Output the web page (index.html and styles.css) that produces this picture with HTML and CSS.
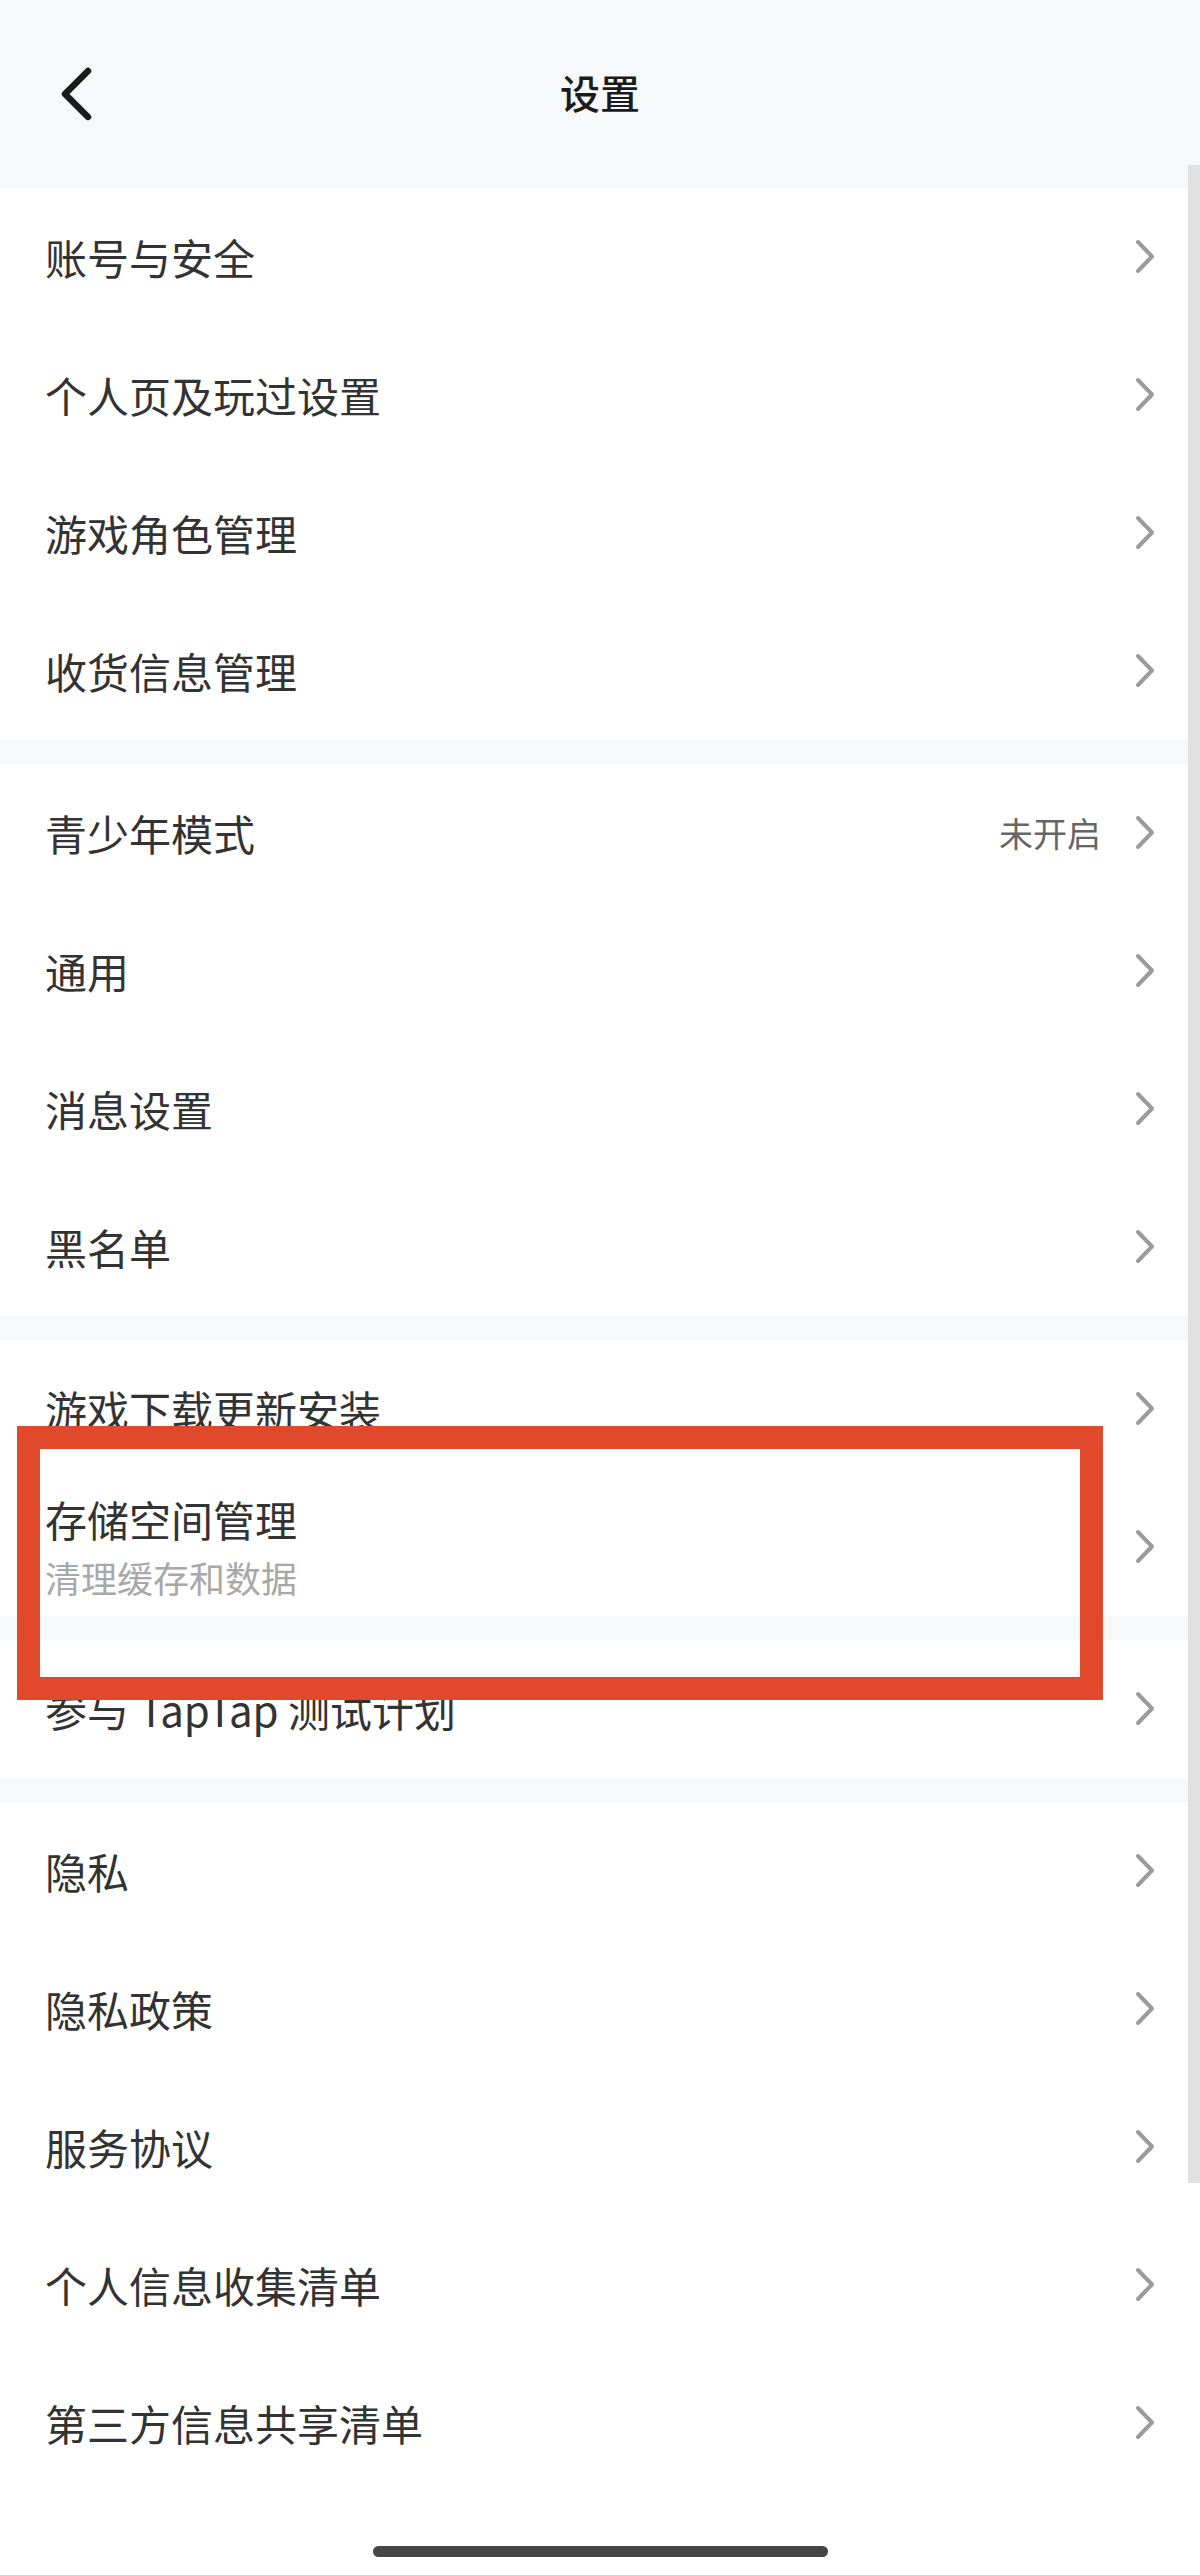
FILE: index.html
```html
<!DOCTYPE html>
<html lang="zh-CN">
<head>
<meta charset="utf-8">
<title>设置</title>
<link rel="stylesheet" href="styles.css">
</head>
<body>
<div class="page">
  <header class="topbar">
    <svg class="back" viewBox="0 0 40 60" width="40" height="60" aria-hidden="true"><path d="M30 8 L7 31 L30 54" fill="none" stroke="#1b1b1b" stroke-width="6.5" stroke-linecap="round" stroke-linejoin="round"/></svg>
    <h1 class="title">设置</h1>
  </header>

  <div class="groups">
    <section class="group">
      <div class="row"><span class="label">账号与安全</span><span class="arrow"></span></div>
      <div class="row"><span class="label">个人页及玩过设置</span><span class="arrow"></span></div>
      <div class="row"><span class="label">游戏角色管理</span><span class="arrow"></span></div>
      <div class="row"><span class="label">收货信息管理</span><span class="arrow"></span></div>
    </section>
    <section class="group">
      <div class="row"><span class="label">青少年模式</span><span class="value">未开启</span><span class="arrow"></span></div>
      <div class="row"><span class="label">通用</span><span class="arrow"></span></div>
      <div class="row"><span class="label">消息设置</span><span class="arrow"></span></div>
      <div class="row"><span class="label">黑名单</span><span class="arrow"></span></div>
    </section>
    <section class="group">
      <div class="row"><span class="label">游戏下载更新安装</span><span class="arrow"></span></div>
      <div class="row">
        <div class="stack">
          <span class="label main">存储空间管理</span>
          <span class="sub">清理缓存和数据</span>
        </div>
        <span class="arrow"></span>
      </div>
    </section>
    <section class="group">
      <div class="row"><span class="label">参与 TapTap 测试计划</span><span class="arrow"></span></div>
    </section>
    <section class="group last">
      <div class="row"><span class="label">隐私</span><span class="arrow"></span></div>
      <div class="row"><span class="label">隐私政策</span><span class="arrow"></span></div>
      <div class="row"><span class="label">服务协议</span><span class="arrow"></span></div>
      <div class="row"><span class="label">个人信息收集清单</span><span class="arrow"></span></div>
      <div class="row"><span class="label">第三方信息共享清单</span><span class="arrow"></span></div>
      <div class="home-area"><span class="home-bar"></span></div>
    </section>
  </div>

  <div class="highlight"></div>
  <div class="scrollbar"></div>
</div>
</body>
</html>
```

FILE: styles.css
```css
html, body {
  margin: 0;
  padding: 0;
  background: #ffffff;
}

body {
  font-family: "Noto Sans CJK SC", "Noto Sans", "Liberation Sans", sans-serif;
  color: #333333;
}

.page {
  position: relative;
  width: 1200px;
  height: 2575px;
  overflow: hidden;
  background: #ffffff;
}

.topbar {
  height: 188px;
  background: #f7f8fa;
  display: flex;
  align-items: center;
  justify-content: center;
  position: relative;
}

.back {
  position: absolute;
  left: 58px;
  top: 63px;
}

.title {
  margin: 0;
  font-size: 40px;
  font-weight: 500;
  color: #1b1b1b;
  line-height: 1;
  padding-bottom: 4px;
}

.groups {
  display: flex;
  flex-direction: column;
  gap: 24px;
  background: #f7f8fa;
}

.group {
  background: #ffffff;
  display: flex;
  flex-direction: column;
}

.row {
  height: 138px;
  display: flex;
  align-items: center;
  padding: 0 44px 0 45px;
  box-sizing: border-box;
}

.label {
  font-size: 42px;
  line-height: 56px;
  color: #333333;
  flex: 1;
  white-space: nowrap;
}

.stack {
  flex: 1;
  display: flex;
  flex-direction: column;
}

.stack .main {
  flex: none;
}

.sub {
  font-size: 36px;
  line-height: 52px;
  margin-top: 4px;
  color: #a8a8a8;
}

.value {
  font-size: 34px;
  color: #666666;
  margin-right: 33px;
  line-height: 1;
}

.arrow {
  width: 22px;
  height: 36px;
  flex: none;
  background-repeat: no-repeat;
  background-image: url("data:image/svg+xml,%3Csvg xmlns='http://www.w3.org/2000/svg' viewBox='0 0 22 36' width='22' height='36'%3E%3Cpath d='M4 3 L18 17.5 L4 32' fill='none' stroke='%239b9b9b' stroke-width='4' stroke-linecap='round' stroke-linejoin='round'/%3E%3C/svg%3E");
}

.home-area {
  height: 83px;
  display: flex;
  justify-content: center;
  align-items: flex-end;
  padding-bottom: 18px;
  box-sizing: border-box;
}

.home-bar {
  width: 455px;
  height: 11px;
  border-radius: 6px;
  background: #454545;
}

.highlight {
  position: absolute;
  left: 17px;
  top: 1426px;
  width: 1086px;
  height: 274px;
  box-sizing: border-box;
  border: 23px solid #e0492c;
}

.scrollbar {
  position: absolute;
  right: 0;
  top: 165px;
  width: 12px;
  height: 2018px;
  background: #e1e1e1;
}
```
